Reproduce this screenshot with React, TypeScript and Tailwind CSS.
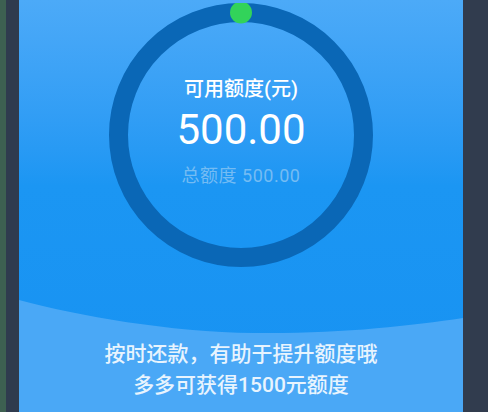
import React from 'react';

export default function App() {
  return (
    <div
      className="flex w-[488px] h-[412px] overflow-hidden bg-[#313c4e]"
      style={{ fontFamily: 'Roboto, "Noto Sans CJK SC", sans-serif' }}
    >
      {/* left edge strips */}
      <div className="w-[6px] h-full bg-[#3d6051]" />
      <div className="w-[13px] h-full bg-[#2f3b4e]" />

      {/* main panel */}
      <div className="relative w-[444px] h-full bg-gradient-to-b from-[#4caaf8] via-[#1b96f3] via-45% to-[#1792f2] flex flex-col items-center">
        {/* wave */}
        <svg className="absolute left-0 bottom-0" width="444" height="112" viewBox="0 0 444 112">
          <path
            d="M0 0 C 60 16, 150 32, 235 33 C 320 34, 390 26, 444 18 L444 112 L0 112 Z"
            fill="#4aa8f6"
          />
        </svg>

        {/* ring */}
        <div className="relative mt-[3px] w-[264px] h-[264px] flex flex-col items-center pt-[72px]">
          <svg className="absolute inset-0" width="264" height="264" viewBox="0 0 264 264">
            <circle cx="132" cy="132" r="122.5" fill="none" stroke="#0a67b6" strokeWidth="19" />
            <circle cx="132" cy="9.5" r="11" fill="#32d35a" />
          </svg>
          <div className="relative text-[20px] leading-[28px] font-medium text-white">可用额度(元)</div>
          <div className="relative mt-[3px] text-[42px] leading-[48px] text-white">500.00</div>
          <div className="relative mt-[10px] text-[18px] leading-[24px] tracking-[0.5px] text-[#74bcf3]">
            总额度 500.00
          </div>
        </div>

        {/* tips */}
        <div className="relative mt-[72px] flex flex-col items-center text-[21px] leading-[31px] font-medium text-[#e8f4fe]">
          <div>按时还款，有助于提升额度哦</div>
          <div>多多可获得1500元额度</div>
        </div>
      </div>
    </div>
  );
}
